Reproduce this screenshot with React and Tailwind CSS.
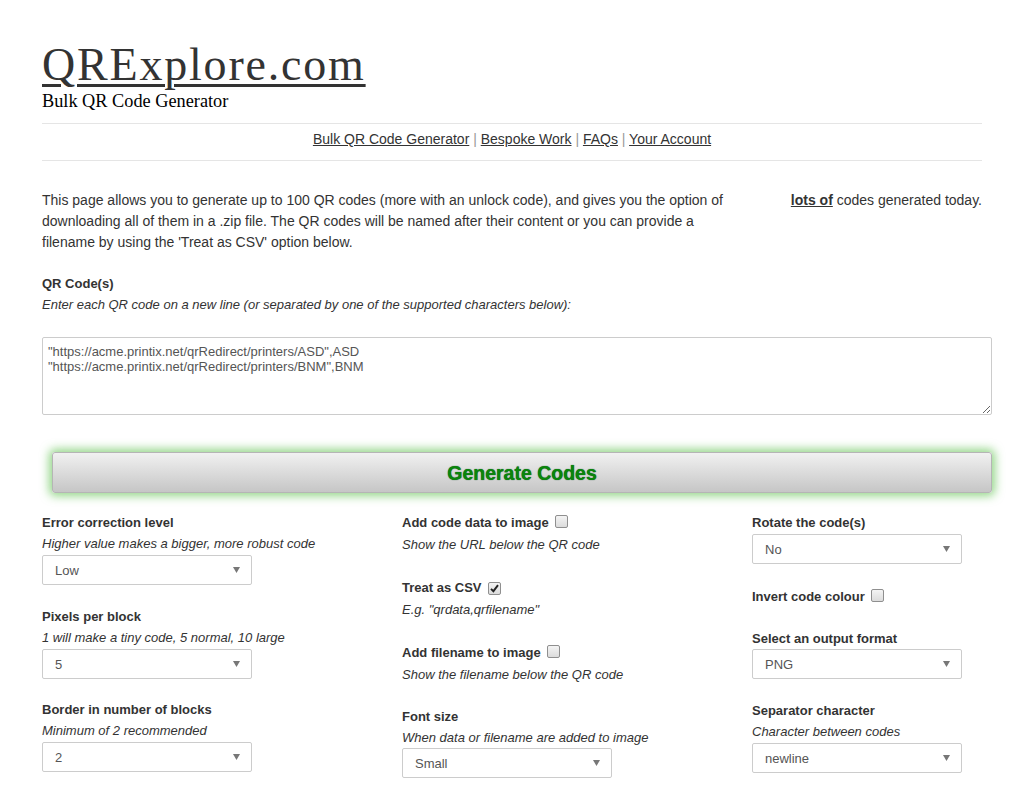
import React from "react";

const sans = { fontFamily: '"Liberation Sans", Arial, sans-serif' };

function Select({ value, tight }) {
  return (
    <div
      className={
        (tight ? "mt-0" : "mt-[1px]") +
        " w-[210px] h-[30px] border border-[#ccc] rounded-[2px] bg-white flex items-center justify-between pl-[12px] pr-[11px] text-[#555]"
      }
    >
      <span>{value}</span>
      <svg width="7" height="6" viewBox="0 0 7 6">
        <path d="M0 0 L7 0 L3.5 6 Z" fill="#777" />
      </svg>
    </div>
  );
}

function Check({ checked }) {
  return (
    <span className="inline-flex ml-[6px] w-[13px] h-[13px] align-[-1px] border border-[#8f8f8f] rounded-[2px] bg-gradient-to-b from-[#f4f4f4] to-[#dcdcdc] items-center justify-center">
      {checked && (
        <svg width="9" height="9" viewBox="0 0 9 9">
          <path d="M1 4.8 L3.4 7.2 L8 1.2" stroke="#222" strokeWidth="1.9" fill="none" />
        </svg>
      )}
    </span>
  );
}

export default function App() {
  return (
    <div className="min-h-screen bg-white text-[#333] text-[13px]" style={sans}>
      <div className="w-[940px] mx-auto">
        {/* ---------------- HEADER ---------------- */}
        <h1
          className="pt-[40px] text-[46px] leading-[50px] tracking-[1.8px]"
          style={{ fontFamily: '"Liberation Serif", Georgia, serif' }}
        >
          <a href="#" className="underline decoration-[3px] underline-offset-[4px]">
            QRExplore.com
          </a>
        </h1>
        <div
          className="text-[18.3px] leading-[22px] text-black"
          style={{ fontFamily: '"Liberation Serif", Georgia, serif' }}
        >
          Bulk QR Code Generator
        </div>

        <hr className="mt-[11px] border-t border-[#e5e5e5]" />
        <div className="pt-[5px] pb-[11px] text-center text-[14px] leading-[20px]">
          <a href="#" className="underline">Bulk QR Code Generator</a>
          <span className="text-[#999]"> | </span>
          <a href="#" className="underline">Bespoke Work</a>
          <span className="text-[#999]"> | </span>
          <a href="#" className="underline">FAQs</a>
          <span className="text-[#999]"> | </span>
          <a href="#" className="underline">Your Account</a>
        </div>
        <hr className="border-t border-[#e5e5e5]" />

        {/* ---------------- INTRO ---------------- */}
        <div className="mt-[29px] flex text-[14px] leading-[21px]">
          <p className="w-[695px]">
            This page allows you to generate up to 100 QR codes (more with an unlock code), and gives you the option of downloading all of them in a .zip file. The QR codes will be named after their content or you can provide a filename by using the 'Treat as CSV' option below.
          </p>
          <div className="flex-1 text-right">
            <a href="#" className="font-bold underline">lots of</a> codes generated today.
          </div>
        </div>

        <div className="mt-[20px] leading-[21px]">
          <div className="font-bold">QR Code(s)</div>
          <div className="italic">
            Enter each QR code on a new line (or separated by one of the supported characters below):
          </div>
        </div>

        <textarea
          className="mt-[22px] block w-[950px] h-[78px] border border-[#ccc] rounded-[2px] px-[5px] py-[6px] text-[13px] leading-[15px] text-[#555]"
          style={sans}
          defaultValue={'"https://acme.printix.net/qrRedirect/printers/ASD",ASD\n"https://acme.printix.net/qrRedirect/printers/BNM",BNM'}
        />

        {/* ---------------- BUTTON ---------------- */}
        <button
          className="mt-[37px] ml-[10px] block w-[940px] h-[41px] pt-[3px] rounded-[3px] border border-[#b5b5b5] bg-gradient-to-b from-[#f1f1f1] to-[#c6c6c6] shadow-[0_0_10px_3px_rgba(60,180,40,0.55)] text-[19.5px] font-bold text-[#0a850a] [text-shadow:0_0_1px_#042]"
          style={sans}
        >
          Generate Codes
        </button>

        {/* ---------------- OPTIONS ---------------- */}
        <div className="mt-[19px] grid grid-cols-[360px_350px_1fr] leading-[21px] pb-[10px]">
          <div>
            <div className="font-bold">Error correction level</div>
            <div className="italic">Higher value makes a bigger, more robust code</div>
            <Select value="Low" />
            <div className="mt-[21px] font-bold">Pixels per block</div>
            <div className="italic">1 will make a tiny code, 5 normal, 10 large</div>
            <Select value="5" />
            <div className="mt-[20px] font-bold">Border in number of blocks</div>
            <div className="italic">Minimum of 2 recommended</div>
            <Select value="2" />
          </div>

          <div>
            <div className="font-bold h-[22px]">Add code data to image<Check /></div>
            <div className="italic">Show the URL below the QR code</div>
            <div className="mt-[22px] font-bold h-[22px]">Treat as CSV<Check checked /></div>
            <div className="italic">E.g. "qrdata,qrfilename"</div>
            <div className="mt-[22px] font-bold h-[22px]">Add filename to image<Check /></div>
            <div className="italic">Show the filename below the QR code</div>
            <div className="mt-[21px] font-bold">Font size</div>
            <div className="italic">When data or filename are added to image</div>
            <Select value="Small" tight />
          </div>

          <div>
            <div className="font-bold">Rotate the code(s)</div>
            <Select value="No" />
            <div className="mt-[22px] font-bold">Invert code colour<Check /></div>
            <div className="mt-[21px] font-bold">Select an output format</div>
            <Select value="PNG" tight />
            <div className="mt-[21px] font-bold">Separator character</div>
            <div className="italic">Character between codes</div>
            <Select value="newline" />
          </div>
        </div>
      </div>
    </div>
  );
}
